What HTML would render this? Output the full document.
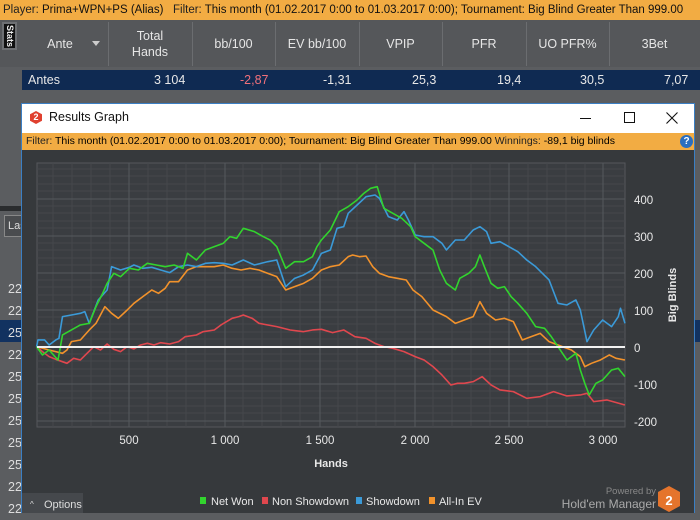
<!DOCTYPE html>
<html><head><meta charset="utf-8"><style>
*{margin:0;padding:0;box-sizing:border-box}
body{width:700px;height:513px;overflow:hidden;background:#5b5d60;font-family:"Liberation Sans",sans-serif;position:relative;font-size:12px}
.a{position:absolute}
.top{left:0;top:0;width:700px;height:20px;background:#f2ac43;color:#222;font-size:11.5px;line-height:20px;padding-left:3px;white-space:nowrap}
.top b{font-weight:normal;color:#111}
.hdr{left:0;top:20px;width:700px;height:47px;background:#55575a}
.hd{position:absolute;top:0;height:47px;color:#e6e6e6;font-size:12.5px;display:flex;align-items:center;justify-content:center;text-align:center;line-height:16px}
.vl{position:absolute;top:2px;width:1px;height:44px;background:#6b6d70}
.row{left:22px;top:70px;width:678px;height:20px;background:#0f2a52;color:#e8e8e8;font-size:12.5px;line-height:20px}
.row span{position:absolute;top:0}
.num{position:absolute;left:8px;color:#ddd;font-size:12.5px}
</style></head><body>
<div class="a top">Player: <b>Prima+WPN+PS (Alias)</b>&nbsp;&nbsp; Filter: <b>This month (01.02.2017 0:00 to 01.03.2017 0:00); Tournament: Big Blind Greater Than 999.00</b></div>
<div class="a hdr">
<div class="a" style="left:2px;top:2px;width:15px;height:28px;background:#111;border:2px solid #6e7073"></div>
<div class="a" style="left:4px;top:5px;width:11px;height:24px;color:#eee;font-size:9px;writing-mode:vertical-rl;line-height:11px;font-weight:bold">Stats</div>
<div class="hd" style="left:30px;width:60px">Ante</div>
<div class="a" style="left:92px;top:21px;border:4px solid transparent;border-top:5px solid #ccc"></div>
<div class="vl" style="left:108px"></div>
<div class="hd" style="left:108px;width:84px">Total<br>Hands</div>
<div class="vl" style="left:192px"></div>
<div class="hd" style="left:192px;width:83px">bb/100</div>
<div class="vl" style="left:275px"></div>
<div class="hd" style="left:275px;width:84px">EV bb/100</div>
<div class="vl" style="left:359px"></div>
<div class="hd" style="left:359px;width:83px">VPIP</div>
<div class="vl" style="left:442px"></div>
<div class="hd" style="left:442px;width:84px">PFR</div>
<div class="vl" style="left:526px"></div>
<div class="hd" style="left:526px;width:83px">UO PFR%</div>
<div class="vl" style="left:609px"></div>
<div class="hd" style="left:609px;width:91px">3Bet</div>
</div>
<div class="a row"><span style="left:6px">Antes</span><span style="left:132px">3 104</span><span style="left:218px;color:#f0707a">-2,87</span><span style="left:301px">-1,31</span><span style="left:390px">25,3</span><span style="left:475px">19,4</span><span style="left:558px">30,5</span><span style="left:642px">7,07</span></div>
<div class="a" style="left:0;top:206px;width:22px;height:5px;background:#2a2c2e"></div>
<div class="a" style="left:4px;top:215px;width:20px;height:22px;border:1px solid #888;background:#4a4c4f;color:#ddd;font-size:11px;line-height:20px;padding-left:3px;overflow:hidden">Las</div>
<div class="a" style="left:0;top:320px;width:22px;height:22px;background:#123260"></div>
<div class="a" style="left:694px;top:320px;width:6px;height:22px;background:#123260"></div>
<div class="a" style="left:0;top:278px;width:22px;height:235px;font-size:12.5px;color:#ddd;line-height:22.4px">
<div class="num">22</div><div class="num" style="top:22px">22</div><div class="num" style="top:44px">25</div><div class="num" style="top:66px">22</div><div class="num" style="top:88px">25</div><div class="num" style="top:110px">25</div><div class="num" style="top:132px">25</div><div class="num" style="top:154px">25</div><div class="num" style="top:176px">25</div><div class="num" style="top:198px">22</div><div class="num" style="top:220px">22</div></div>
<div class="a" style="left:21px;top:103px;width:674px;height:410px;background:#36393c;border:1px solid #3b7fc4;border-bottom:none"></div>
<div class="a" style="left:22px;top:104px;width:672px;height:29px;background:#fff"></div>
<div class="a" style="left:30px;top:111px;width:12px;height:13px;background:#e0402f;clip-path:polygon(50% 0,100% 25%,100% 75%,50% 100%,0 75%,0 25%);color:#fff;font-size:9px;font-weight:bold;text-align:center;line-height:13px">2</div>
<div class="a" style="left:49px;top:110px;font-size:12.5px;color:#111">Results Graph</div>
<div class="a" style="left:580px;top:118px;width:11px;height:1px;background:#111"></div>
<div class="a" style="left:624px;top:112px;width:11px;height:11px;border:1px solid #111"></div>
<svg class="a" style="left:666px;top:112px" width="12" height="12"><path d="M0.5 0.5L11.5 11.5M11.5 0.5L0.5 11.5" stroke="#111" stroke-width="1.1"/></svg>
<div class="a" style="left:22px;top:133px;width:672px;height:17px;background:#f2ac43;font-size:10.5px;line-height:17px;padding-left:4px;color:#222;white-space:nowrap">Filter: <b style="font-weight:normal;color:#000">This month (01.02.2017 0:00 to 01.03.2017 0:00); Tournament: Big Blind Greater Than 999.00</b> Winnings: <span style="color:#000">-89,1 big blinds</span></div>
<div class="a" style="left:680px;top:135px;width:13px;height:13px;border-radius:50%;background:#2b6fc0;color:#fff;font-size:10px;font-weight:bold;text-align:center;line-height:13px">?</div>
<svg class="a" style="left:0;top:0" width="700" height="513">
<rect x="37" y="163" width="588" height="264" fill="#3a3d41" stroke="#55585c"/>
<g stroke="#45484c" stroke-width="1">
<path d="M53 163V427M72 163V427M91 163V427M110 163V427M148 163V427M167 163V427M186 163V427M205 163V427M243 163V427M262 163V427M281 163V427M300 163V427M338 163V427M357 163V427M376 163V427M395 163V427M433 163V427M452 163V427M471 163V427M490 163V427M528 163V427M547 163V427M566 163V427M585 163V427"/>
<path d="M37 169H625M37 176H625M37 184H625M37 191H625M37 206H625M37 213H625M37 221H625M37 228H625M37 243H625M37 250H625M37 258H625M37 265H625M37 280H625M37 287H625M37 295H625M37 302H625M37 317H625M37 324H625M37 332H625M37 339H625M37 354H625M37 361H625M37 369H625M37 376H625M37 391H625M37 398H625M37 406H625M37 413H625"/>
</g>
<g stroke="#55595d" stroke-width="1">
<path d="M129 163V427M225 163V427M320 163V427M415 163V427M509 163V427M603 163V427"/>
<path d="M37 199H625M37 236H625M37 273H625M37 310H625M37 384H625M37 421H625"/>
</g>
<g fill="none" stroke-width="1.6" stroke-linejoin="round" transform="translate(0,150) scale(0.4464,0.3333)">
<polyline vector-effect="non-scaling-stroke" stroke="#e0474e" points="82,590 95,605 110,620 125,628 150,640 165,625 180,630 195,610 210,590 225,600 240,582 255,598 270,605 285,590 300,597 315,585 330,580 345,585 360,578 380,582 400,575 415,560 440,555 455,545 480,540 495,525 520,505 535,500 545,495 565,505 580,520 600,525 620,530 650,540 680,545 700,540 720,538 745,548 770,540 795,560 820,565 840,580 860,590 880,595 905,605 930,620 950,630 970,650 990,675 1010,705 1025,700 1040,700 1060,695 1080,680 1100,705 1120,720 1150,725 1180,745 1210,740 1240,725 1270,738 1300,735 1315,730 1330,755 1360,750 1400,765"/>
<polyline vector-effect="non-scaling-stroke" stroke="#f2922b" points="82,590 110,600 140,610 150,600 160,575 180,570 200,540 215,520 235,470 250,490 265,505 285,480 300,460 320,440 340,420 355,430 370,415 380,395 400,395 420,360 440,350 460,350 480,350 500,345 520,355 540,360 560,355 580,360 600,370 620,380 640,420 660,410 680,400 700,385 720,360 740,350 760,345 780,320 790,315 805,320 820,318 835,350 850,370 870,380 890,385 910,390 925,420 945,440 970,480 1000,500 1020,520 1040,510 1060,500 1075,455 1090,490 1110,510 1130,505 1150,515 1170,570 1190,560 1210,550 1230,575 1250,585 1280,600 1300,620 1310,650 1325,640 1345,630 1365,615 1380,625 1400,630"/>
<polyline vector-effect="non-scaling-stroke" stroke="#3b9ad8" points="82,590 85,570 100,570 110,585 125,570 132,565 140,500 160,495 180,490 190,485 200,520 220,450 240,420 250,350 270,360 290,352 300,345 320,355 340,352 360,360 380,368 400,350 420,345 440,350 460,340 480,338 500,340 520,345 545,330 570,345 600,335 620,330 640,410 660,385 680,375 700,360 720,310 740,300 755,235 770,230 780,190 800,165 820,140 840,135 850,145 870,200 890,210 905,185 915,210 930,255 950,260 970,260 990,280 1000,300 1020,270 1040,270 1060,240 1075,230 1090,245 1100,280 1120,275 1140,290 1160,305 1180,330 1200,350 1230,390 1250,460 1270,465 1290,450 1300,480 1315,575 1330,540 1350,510 1370,530 1385,500 1390,475 1400,520"/>
<polyline vector-effect="non-scaling-stroke" stroke="#32d42e" points="82,590 95,615 110,600 130,630 140,555 160,540 180,525 200,520 215,470 230,430 240,400 255,370 270,380 290,355 310,360 330,340 350,345 370,350 390,345 410,355 420,310 440,330 460,300 480,290 500,280 515,260 530,265 545,235 570,245 590,260 605,270 620,290 640,355 660,335 680,335 700,320 710,290 720,270 740,240 760,185 780,170 800,150 815,130 830,115 845,110 860,175 880,190 900,205 920,230 930,260 950,280 970,300 985,360 1000,400 1020,420 1030,385 1050,370 1065,350 1075,315 1085,350 1100,400 1115,415 1130,410 1145,440 1160,460 1180,490 1200,530 1220,535 1235,560 1250,590 1270,630 1290,610 1300,660 1310,700 1320,735 1335,700 1350,690 1370,660 1385,655 1400,680"/>
</g>
<line x1="37" y1="347" x2="625" y2="347" stroke="#f0f0f0" stroke-width="2"/>
<g fill="#e8e8e8" font-size="11.5" font-family="Liberation Sans">
<text x="129" y="444" text-anchor="middle">500</text><text x="225" y="444" text-anchor="middle">1 000</text><text x="320" y="444" text-anchor="middle">1 500</text><text x="415" y="444" text-anchor="middle">2 000</text><text x="509" y="444" text-anchor="middle">2 500</text><text x="603" y="444" text-anchor="middle">3 000</text>
<text x="634" y="204">400</text><text x="634" y="241">300</text><text x="634" y="278">200</text><text x="634" y="315">100</text><text x="634" y="352">0</text><text x="634" y="389">-100</text><text x="634" y="426">-200</text>
<text x="331" y="467" text-anchor="middle" font-weight="bold" font-size="11">Hands</text>
<text transform="translate(676,295) rotate(-90)" text-anchor="middle" font-weight="bold" font-size="11">Big Blinds</text>
<text x="211" y="505" font-size="11">Net Won</text><text x="272" y="505" font-size="11">Non Showdown</text><text x="366" y="505" font-size="11">Showdown</text><text x="439" y="505" font-size="11">All-In EV</text>
</g>
<rect x="200" y="497" width="6" height="7" fill="#32d42e"/><rect x="262" y="497" width="6" height="7" fill="#e0474e"/><rect x="356" y="497" width="6" height="7" fill="#3b9ad8"/><rect x="429" y="497" width="6" height="7" fill="#f2922b"/>
<rect x="22" y="493" width="61" height="20" fill="#45484c"/>
<text x="30" y="507" fill="#ddd" font-size="8" font-family="Liberation Sans">^</text>
<text x="44" y="508" fill="#ddd" font-size="11" font-family="Liberation Sans">Options</text>
<text x="656" y="494" fill="#888" font-size="9.5" text-anchor="end" font-family="Liberation Sans">Powered by</text>
<text x="656" y="508" fill="#aaa" font-size="12" text-anchor="end" font-family="Liberation Sans">Hold'em Manager</text>
<polygon points="669,486 680,492 680,506 669,512 658,506 658,492" fill="#e5742c"/>
<text x="669" y="505" fill="#fff" font-size="13" font-weight="bold" text-anchor="middle" font-family="Liberation Sans">2</text>
</svg>
</body></html>
